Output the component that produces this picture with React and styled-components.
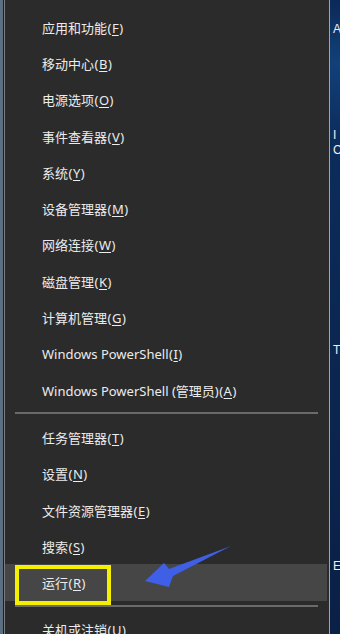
import React from "react";
import styled, { createGlobalStyle } from "styled-components";

const GlobalStyle = createGlobalStyle`
  html, body {
    margin: 0;
    padding: 0;
    background: #2b2b2b;
  }
  body {
    font-family: "Noto Sans", "Noto Sans CJK SC", sans-serif;
  }
`;

const groups = [
  [
    { label: "应用和功能", key: "F" },
    { label: "移动中心", key: "B" },
    { label: "电源选项", key: "O" },
    { label: "事件查看器", key: "V" },
    { label: "系统", key: "Y" },
    { label: "设备管理器", key: "M" },
    { label: "网络连接", key: "W" },
    { label: "磁盘管理", key: "K" },
    { label: "计算机管理", key: "G" },
    { label: "Windows PowerShell", key: "I" },
    { label: "Windows PowerShell (管理员)", key: "A" },
  ],
  [
    { label: "任务管理器", key: "T" },
    { label: "设置", key: "N" },
    { label: "文件资源管理器", key: "E" },
    { label: "搜索", key: "S" },
    { label: "运行", key: "R", active: true, marked: true },
  ],
  [{ label: "关机或注销", key: "U" }],
];

// bits of desktop text peeking out on the right
const desktopBits = [
  { text: "A", gap: 22 },
  { text: "I", gap: 92 },
  { text: "C", gap: 1 },
  { text: "T", gap: 186 },
  { text: "E", gap: 202 },
];

const App = () => {
  return (
    <React.Fragment>
      <GlobalStyle />
      <Screen>
        <LeftEdge />
        <Panel>
          {groups.map((items, gi) => (
            <React.Fragment key={gi}>
              {gi > 0 && <Separator />}
              {items.map((it) => (
                <Item key={it.label} $active={it.active}>
                  <span>
                    {it.label}
                    <Paren>(</Paren>
                    <u>{it.key}</u>
                    <Paren>)</Paren>
                  </span>
                  {it.marked && <Mark />}
                </Item>
              ))}
            </React.Fragment>
          ))}
          <Arrow viewBox="0 0 100 40" width="100" height="40">
            <polygon
              points="3,35 22,17 27,23 89,0 31,30 27,41"
              fill="#3f5fe6"
            />
          </Arrow>
        </Panel>
        <Desktop>
          {desktopBits.map((b, i) => (
            <DeskText key={i} $gap={b.gap}>
              {b.text}
            </DeskText>
          ))}
        </Desktop>
      </Screen>
    </React.Fragment>
  );
};

export default App;

const Screen = styled.div`
  display: flex;
  width: 340px;
  height: 634px;
  overflow: hidden;
`;

const LeftEdge = styled.div`
  width: 3px;
  flex-shrink: 0;
  background: #5c6e82;
  border-right: 1px solid #1e1e1e;
  position: relative;
  &::after {
    content: "";
    position: absolute;
    right: -2px;
    top: 0;
    bottom: 0;
    width: 1px;
    background: #7d7d7d;
  }
`;

const Panel = styled.div`
  position: relative;
  flex: 1;
  margin-left: 1px;
  background: #2b2b2b;
  padding-top: 9px;
  display: flex;
  flex-direction: column;
`;

const Item = styled.div`
  position: relative;
  height: 36.3px;
  flex-shrink: 0;
  display: flex;
  align-items: center;
  padding-left: 37px;
  margin-right: 2px;
  font-family: "Noto Sans", "Noto Sans CJK SC", sans-serif;
  font-size: 13px;
  color: #ececec;
  background: ${(p) => (p.$active ? "#464646" : "transparent")};
  u {
    text-decoration-thickness: 1px;
    text-underline-offset: 2px;
  }
`;

const Paren = styled.span`
  margin: 0 0.5px;
`;

const Separator = styled.div`
  height: 2px;
  flex-shrink: 0;
  margin: 4px 11px 5px 10px;
  background: #6a6a6a;
`;

const Mark = styled.div`
  position: absolute;
  left: 10px;
  top: 1px;
  width: 88px;
  height: 32px;
  border: 4px solid #f4f000;
`;

const Arrow = styled.svg`
  position: absolute;
  left: 137px;
  top: 546px;
  overflow: visible;
`;

const Desktop = styled.div`
  width: 10px;
  flex-shrink: 0;
  border-left: 1px solid #9aa6b4;
  background: linear-gradient(
    180deg,
    #0b2a58 0%,
    #12407a 10%,
    #0c2c5c 22%,
    #0a2650 60%,
    #0a2047 100%
  );
  display: flex;
  flex-direction: column;
  overflow: hidden;
`;

const DeskText = styled.div`
  margin-top: ${(p) => p.$gap}px;
  margin-left: 3px;
  font-family: "Liberation Sans", sans-serif;
  font-size: 12px;
  line-height: 14px;
  color: #f0f0f0;
`;
